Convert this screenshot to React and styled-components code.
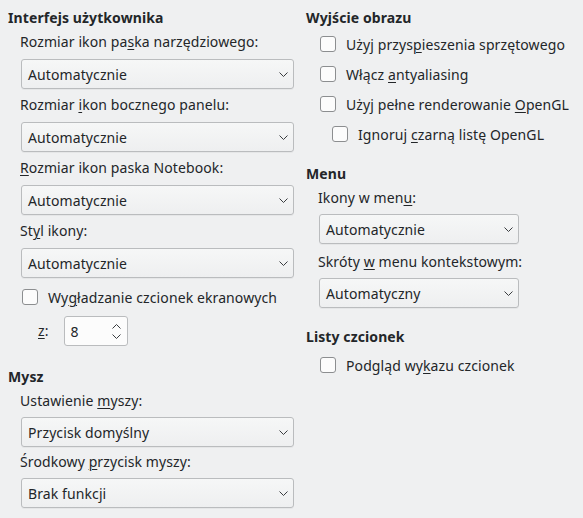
import React from 'react'
import styled, { createGlobalStyle } from 'styled-components'

const GlobalStyle = createGlobalStyle`
  body {
    margin: 0;
    background: #eff0f1;
    color: #232629;
    font-family: "Noto Sans", "Open Sans", sans-serif;
    font-size: 14px;
    letter-spacing: 0.1px;
  }
`

const Page = styled.div`
  display: grid;
  grid-template-columns: 286px 1fr;
  column-gap: 12px;
  padding: 9px 8px;
  width: 583px;
  height: 518px;
  box-sizing: border-box;
`

const Column = styled.div`
  display: flex;
  flex-direction: column;
  gap: ${(p) => p.gap || 20}px;
`

const Section = styled.section`
  display: flex;
  flex-direction: column;
  gap: 6px;
`

const Heading = styled.h3`
  margin: 0;
  font-size: 14px;
  font-weight: bold;
  line-height: 18px;
`

const Body = styled.div`
  display: flex;
  flex-direction: column;
  gap: ${(p) => p.gap || 7}px;
  padding-left: 12px;
`

const Field = styled.div`
  display: flex;
  flex-direction: column;
  gap: ${(p) => p.gap || 8}px;
`

const Label = styled.span`
  line-height: 18px;
  white-space: nowrap;
`

const Mn = styled.u`
  text-decoration: underline;
  text-underline-offset: 2px;
  text-decoration-thickness: 1px;
`

const ComboBox = styled.div`
  display: flex;
  align-items: center;
  justify-content: space-between;
  box-sizing: border-box;
  height: 30px;
  width: ${(p) => (p.width ? `${p.width}px` : 'auto')};
  margin-left: 1px;
  padding: 0 5px 0 6px;
  border: 1px solid #babcbe;
  border-radius: 3px;
  background: linear-gradient(#f6f7f7, #eeeff0);
  box-shadow: 0 1px 0 rgba(0, 0, 0, 0.04);
`

const CheckRow = styled.label`
  display: flex;
  align-items: center;
  gap: 10px;
  height: 22px;
  margin-top: ${(p) => p.top || 0}px;
  margin-left: ${(p) => (p.indent ? 14 : 2)}px;
  white-space: nowrap;
`

const Box = styled.span`
  width: 16px;
  height: 16px;
  box-sizing: border-box;
  border: 1px solid #8c8e90;
  border-radius: 3px;
  background: #fcfcfc;
  flex-shrink: 0;
`

const SpinRow = styled.div`
  display: flex;
  align-items: center;
  gap: 15px;
  margin-top: 1px;
  padding-left: 18px;
`

const SpinBox = styled.div`
  display: flex;
  align-items: center;
  justify-content: space-between;
  box-sizing: border-box;
  width: 64px;
  height: 30px;
  padding: 0 6px 0 6px;
  border: 1px solid #babcbe;
  border-radius: 3px;
  background: #fcfcfc;
`

const Arrows = styled.span`
  display: flex;
  flex-direction: column;
  gap: 5px;
  margin-top: 1px;
`

const Chevron = ({ up }) => (
  <svg width="9" height="5" viewBox="0 0 9 5">
    <polyline
      points={up ? '0.5,4.5 4.5,0.5 8.5,4.5' : '0.5,0.5 4.5,4.5 8.5,0.5'}
      fill="none"
      stroke="#3a3d40"
      strokeWidth="1"
    />
  </svg>
)

const Combo = ({ value, width }) => (
  <ComboBox width={width}>
    <span>{value}</span>
    <Chevron />
  </ComboBox>
)

const Check = ({ children, indent, top }) => (
  <CheckRow indent={indent} top={top}>
    <Box />
    <span>{children}</span>
  </CheckRow>
)

export default function App() {
  return (
    <>
      <GlobalStyle />
      <Page>
        <Column gap={22}>
          <Section>
            <Heading>Interfejs użytkownika</Heading>
            <Body>
              <Field>
                <Label>Rozmiar ikon pa<Mn>s</Mn>ka narzędziowego:</Label>
                <Combo value="Automatycznie" />
              </Field>
              <Field>
                <Label>Rozmiar <Mn>i</Mn>kon bocznego panelu:</Label>
                <Combo value="Automatycznie" />
              </Field>
              <Field>
                <Label><Mn>R</Mn>ozmiar ikon paska Notebook:</Label>
                <Combo value="Automatycznie" />
              </Field>
              <Field>
                <Label>St<Mn>y</Mn>l ikony:</Label>
                <Combo value="Automatycznie" />
              </Field>
              <Check top={1}>Wy<Mn>g</Mn>ładzanie czcionek ekranowych</Check>
              <SpinRow>
                <Label><Mn>z</Mn>:</Label>
                <SpinBox>
                  <span>8</span>
                  <Arrows>
                    <Chevron up />
                    <Chevron />
                  </Arrows>
                </SpinBox>
              </SpinRow>
            </Body>
          </Section>
          <Section>
            <Heading>Mysz</Heading>
            <Body gap={6}>
              <Field gap={7}>
                <Label>Ustawienie <Mn>m</Mn>yszy:</Label>
                <Combo value="Przycisk domyślny" />
              </Field>
              <Field gap={7}>
                <Label>Środkowy <Mn>p</Mn>rzycisk myszy:</Label>
                <Combo value="Brak funkcji" />
              </Field>
            </Body>
          </Section>
        </Column>

        <Column gap={20}>
          <Section>
            <Heading>Wyjście obrazu</Heading>
            <Body gap={8}>
              <Check>Użyj przys<Mn>p</Mn>ieszenia sprzętowego</Check>
              <Check>Włącz <Mn>a</Mn>ntyaliasing</Check>
              <Check>Użyj pełne renderowanie <Mn>O</Mn>penGL</Check>
              <Check indent>Ignoruj <Mn>c</Mn>zarną listę OpenGL</Check>
            </Body>
          </Section>
          <Section>
            <Heading>Menu</Heading>
            <Body gap={9}>
              <Field gap={7}>
                <Label>Ikony w men<Mn>u</Mn>:</Label>
                <Combo value="Automatycznie" width={200} />
              </Field>
              <Field gap={7}>
                <Label>Skróty <Mn>w</Mn> menu kontekstowym:</Label>
                <Combo value="Automatyczny" width={200} />
              </Field>
            </Body>
          </Section>
          <Section>
            <Heading>Listy czcionek</Heading>
            <Body>
              <Check top={2}>Podgląd wy<Mn>k</Mn>azu czcionek</Check>
            </Body>
          </Section>
        </Column>
      </Page>
    </>
  )
}
